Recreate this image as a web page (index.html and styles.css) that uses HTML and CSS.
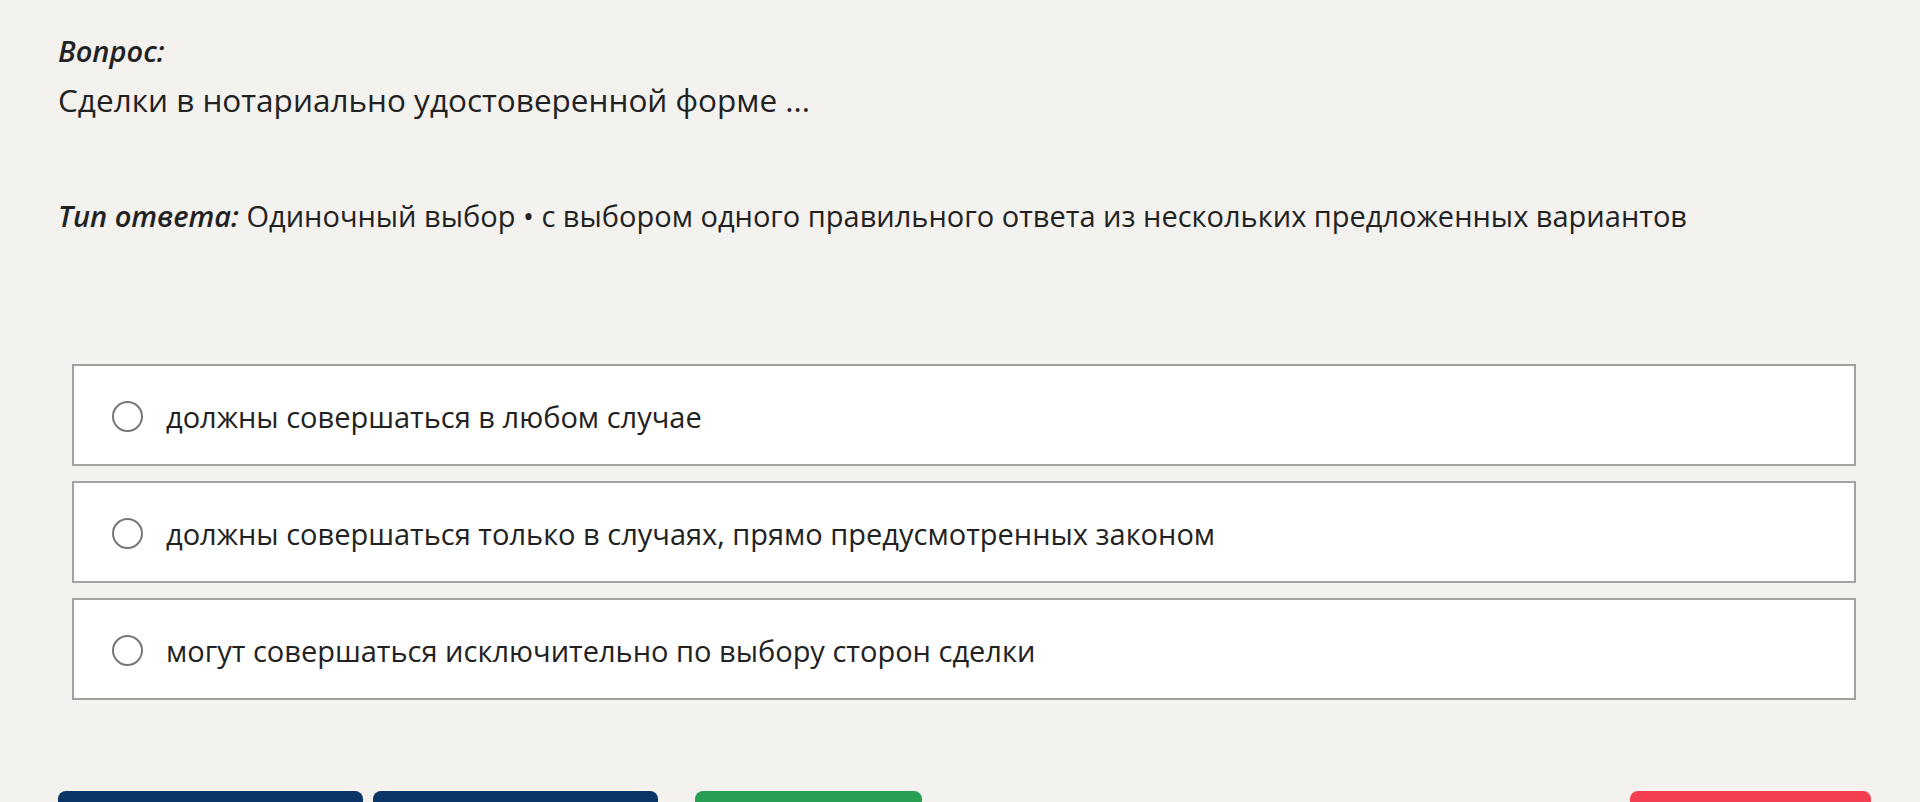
FILE: index.html
```html
<!DOCTYPE html>
<html lang="ru">
<head>
  <meta charset="UTF-8">
  <title>Вопрос</title>
  <link rel="stylesheet" href="styles.css">
</head>
<body>
  <div class="question">
    <div class="label">Вопрос:</div>
    <div class="question-text">Сделки в нотариально удостоверенной форме ...</div>
  </div>
  <div class="answer-type"><span class="label">Тип ответа:</span> Одиночный выбор • с выбором одного правильного ответа из нескольких предложенных вариантов</div>

  <div class="options">
    <label class="option"><span class="radio"></span>должны совершаться в любом случае</label>
    <label class="option"><span class="radio"></span>должны совершаться только в случаях, прямо предусмотренных законом</label>
    <label class="option"><span class="radio"></span>могут совершаться исключительно по выбору сторон сделки</label>
  </div>

  <div class="buttons">
    <button class="btn btn-blue btn-wide">Предыдущий</button>
    <button class="btn btn-blue btn-mid">Следующий</button>
    <button class="btn btn-green">Ответить</button>
    <button class="btn btn-red">Завершить</button>
  </div>
</body>
</html>
```

FILE: styles.css
```css
body { margin: 0; padding: 29px 58px 0; background: #f3f2ef; color: #222; font-family: "Open Sans", "Noto Sans", sans-serif; font-size: 29px; overflow: hidden; }
.label { font-weight: 600; font-style: italic; }
.question .label { line-height: 44px; }
.question-text { line-height: 44px; margin-top: 5px; font-size: 31.5px; }
.answer-type { margin-top: 72px; line-height: 44px; }
.options { margin: 126px 6px 0 14px; display: flex; flex-direction: column; gap: 15px; }
.option { display: flex; align-items: center; height: 95px; padding: 3px 0 0 38px; background: #fff; border: 2px solid #a2a2a2; }
.radio { width: 27px; height: 27px; border: 2px solid #777; border-radius: 50%; margin-right: 23px; flex-shrink: 0; }
.buttons { display: flex; margin-top: 91px; }
.btn { height: 56px; border: none; border-radius: 8px; color: #fff; font-size: 22px; font-family: inherit; }
.btn-blue { background: #0b3467; }
.btn-wide { width: 305px; margin-right: 10px; }
.btn-mid { width: 285px; margin-right: 37px; }
.btn-green { background: #27a054; width: 227px; }
.btn-red { background: #f43f50; width: 241px; margin-left: auto; margin-right: -9px; }
```
